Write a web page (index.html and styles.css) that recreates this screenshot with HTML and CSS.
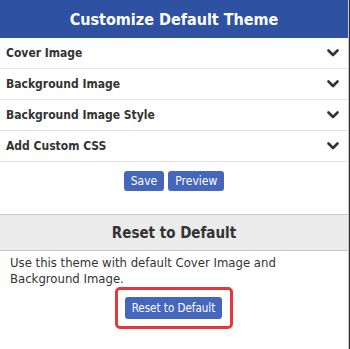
FILE: index.html
```html
<!DOCTYPE html>
<html>
<head>
<meta charset="utf-8">
<link rel="stylesheet" href="styles.css">
</head>
<body>
<div class="panel">
  <div class="header">Customize Default Theme</div>
  <div class="row"><span>Cover Image</span><svg class="chev" viewBox="0 0 12 8" width="12" height="8"><polyline points="1.5,1.5 6,6 10.5,1.5"/></svg></div>
  <div class="row"><span>Background Image</span><svg class="chev" viewBox="0 0 12 8" width="12" height="8"><polyline points="1.5,1.5 6,6 10.5,1.5"/></svg></div>
  <div class="row"><span>Background Image Style</span><svg class="chev" viewBox="0 0 12 8" width="12" height="8"><polyline points="1.5,1.5 6,6 10.5,1.5"/></svg></div>
  <div class="row"><span>Add Custom CSS</span><svg class="chev" viewBox="0 0 12 8" width="12" height="8"><polyline points="1.5,1.5 6,6 10.5,1.5"/></svg></div>
  <div class="actions">
    <button class="btn">Save</button>
    <button class="btn">Preview</button>
  </div>
  <div class="section-title">Reset to Default</div>
  <p class="desc">Use this theme with default Cover Image and Background Image.</p>
  <div class="reset-wrap">
    <div class="highlight"><button class="btn btn-reset">Reset to Default</button></div>
  </div>
</div>
</body>
</html>
```
FILE: styles.css
```css
html, body {
  margin: 0;
  padding: 0;
}
body {
  background: #2f2f2f;
  font-family: "DejaVu Sans Condensed", "DejaVu Sans", sans-serif;
  color: #333;
}
.panel {
  width: 348px;
  height: 349px;
  background: #fff;
  border-right: 1px solid #c8c8c8;
  overflow: hidden;
}
.header {
  height: 38px;
  background: #2e51a2;
  color: #fff;
  font-weight: bold;
  font-size: 16px;
  display: flex;
  align-items: center;
  justify-content: center;
}
.row {
  height: 30px;
  border-bottom: 1px solid #e2e2e2;
  display: flex;
  align-items: center;
  justify-content: space-between;
  padding: 0 9px 0 6px;
  font-weight: bold;
  font-size: 12px;
  color: #333;
}
.chev polyline {
  fill: none;
  stroke: #333;
  stroke-width: 2.6;
  stroke-linecap: round;
  stroke-linejoin: round;
}
.actions {
  display: flex;
  justify-content: center;
  gap: 4px;
  padding: 9px 0 23px 0;
}
.btn {
  background: #4466bb;
  color: #fff;
  border: none;
  border-radius: 3px;
  font-family: inherit;
  font-size: 12px;
  height: 20px;
  padding: 0 7px;
  margin: 0;
}
.section-title {
  height: 35px;
  background: #ebebeb;
  border-top: 1px solid #c8c8c8;
  border-bottom: 1px solid #c8c8c8;
  display: flex;
  align-items: center;
  justify-content: center;
  font-weight: bold;
  font-size: 15px;
  color: #333;
}
.desc {
  margin: 0;
  padding: 4px 10px 0 10px;
  font-size: 13px;
  line-height: 16px;
}
.reset-wrap {
  display: flex;
  justify-content: center;
  padding-top: 0;
}
.highlight {
  border: 3px solid #e8373a;
  border-radius: 5px;
  padding: 7px 8px 7px 7px;
}
.btn-reset {
  height: 22px;
  padding: 0 7px;
  font-size: 11.5px;
}
```
